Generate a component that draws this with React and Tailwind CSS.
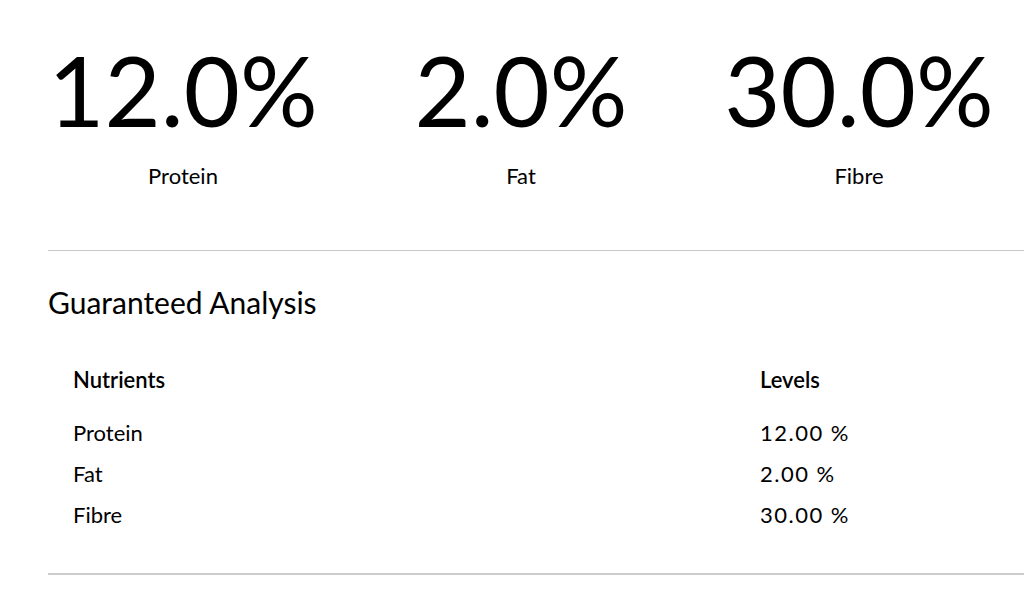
import React from "react";

const stats = [
  { value: "12.0%", label: "Protein" },
  { value: "2.0%", label: "Fat" },
  { value: "30.0%", label: "Fibre" },
];

const rows = [
  { name: "Protein", level: "12.00 %" },
  { name: "Fat", level: "2.00 %" },
  { name: "Fibre", level: "30.00 %" },
];

const App = () => {
  return (
    <div className="w-[1024px] h-[602px] overflow-hidden bg-white text-black font-['Futura','Lato',sans-serif]">
      <div className="w-[1100px] pl-12">
        {/* Headline numbers */}
        <div className="flex gap-[68px] pt-[30px] pb-[60px]">
          {stats.map((s) => (
            <div key={s.label} className="w-[270px] flex flex-col items-center">
              <div className="text-[97px] leading-[120px]">{s.value}</div>
              <div className="text-[22px] leading-[28px] mt-[12px]">{s.label}</div>
            </div>
          ))}
        </div>

        <div className="border-t border-[#c8c8c8]" />

        {/* Guaranteed analysis */}
        <h2 className="text-[30px] leading-[36px] pt-[33px] font-normal">Guaranteed Analysis</h2>

        <div className="pl-[25px] pt-[39px] pb-[38px]">
          <div className="grid grid-cols-[687px_1fr] text-[22px] leading-[41px]">
            <div className="font-semibold mb-[12px]">Nutrients</div>
            <div className="font-semibold mb-[12px]">Levels</div>
            {rows.map((r) => (
              <React.Fragment key={r.name}>
                <div>{r.name}</div>
                <div className="tracking-[1.5px]">{r.level}</div>
              </React.Fragment>
            ))}
          </div>
        </div>

        <div className="border-t-2 border-[#cccccc]" />
      </div>
    </div>
  );
};

export default App;
